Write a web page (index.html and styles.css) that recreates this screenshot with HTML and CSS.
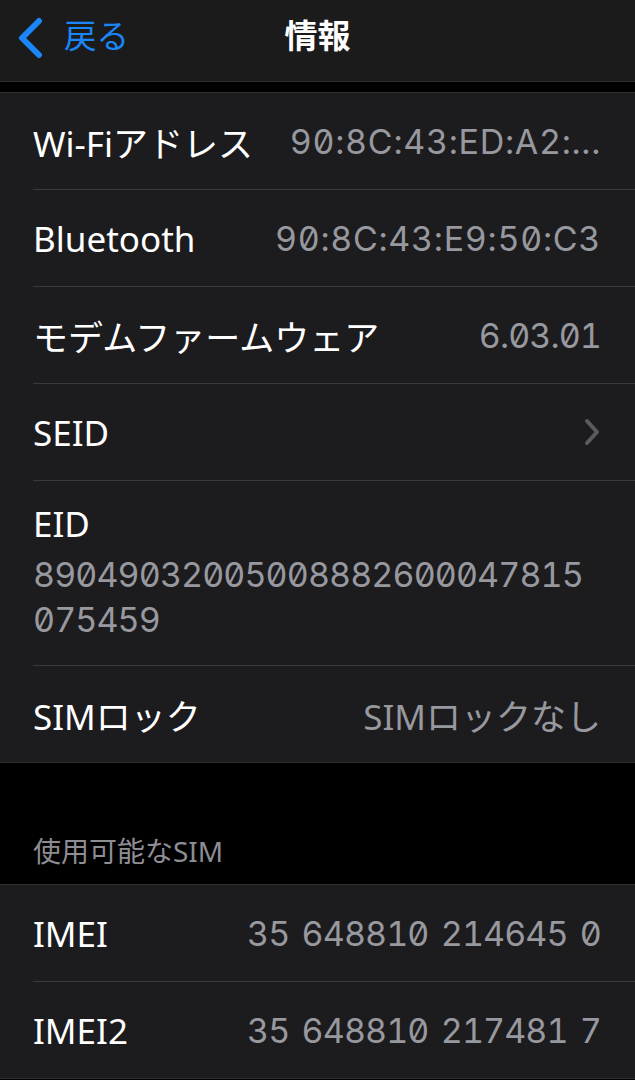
FILE: index.html
```html
<!DOCTYPE html>
<html lang="ja">
  <head>
    <meta charset="UTF-8" />
    <meta name="viewport" content="width=device-width, initial-scale=1.0" />
    <title>情報</title>
    <link rel="stylesheet" href="styles.css">
  </head>
  <body>
    <header class="nav-bar">
      <a class="back-link" href="#">
        <svg class="back-chevron" width="28" height="42" viewBox="0 0 28 42">
          <path d="M23 4 L6 21 L23 38" />
        </svg>
        <span>戻る</span>
      </a>
      <h1 class="nav-title">情報</h1>
      <span></span>
    </header>

    <section class="group">
      <div class="row">
        <span class="label">Wi-Fiアドレス</span>
        <span class="value value-mac">90:8C:43:ED:A2:...</span>
      </div>
      <div class="row">
        <span class="label">Bluetooth</span>
        <span class="value value-mac">90:8C:43:E9:50:C3</span>
      </div>
      <div class="row">
        <span class="label">モデムファームウェア</span>
        <span class="value">6.03.01</span>
      </div>
      <div class="row">
        <span class="label">SEID</span>
        <svg class="chevron" width="18" height="30" viewBox="0 0 18 30">
          <path d="M4 4 L14 15 L4 26" />
        </svg>
      </div>
      <div class="row row-stacked">
        <span class="label">EID</span>
        <span class="value">89049032005008882600047815</span>
        <span class="value">075459</span>
      </div>
      <div class="row">
        <span class="label">SIMロック</span>
        <span class="value value-text">SIMロックなし</span>
      </div>
    </section>

    <div class="section-header">使用可能なSIM</div>

    <section class="group">
      <div class="row">
        <span class="label">IMEI</span>
        <span class="value value-imei">35 648810 214645 0</span>
      </div>
      <div class="row">
        <span class="label">IMEI2</span>
        <span class="value value-imei">35 648810 217481 7</span>
      </div>
    </section>
  </body>
</html>
```

FILE: styles.css
```css
/* Page */
body {
  margin: 0;
  background: #000;
  color: #fff;
  font-family: "Noto Sans", "Noto Sans CJK JP", sans-serif;
  font-size: 35px;
}

/* Navigation bar */
.nav-bar {
  box-sizing: border-box;
  height: 82px;
  padding-bottom: 14px;
  background: #1b1b1c;
  border-bottom: 1px solid #2c2c2e;
  display: grid;
  grid-template-columns: 1fr auto 1fr;
  align-items: center;
}

.back-link {
  display: flex;
  align-items: center;
  gap: 20px;
  padding-left: 16px;
  color: #1a86f8;
  text-decoration: none;
  font-size: 32.5px;
}

.back-chevron {
  margin-top: 8px;
}

.back-chevron path {
  fill: none;
  stroke: #1a86f8;
  stroke-width: 6;
  stroke-linecap: round;
  stroke-linejoin: round;
}

.nav-title {
  margin: 0;
  font-size: 33px;
  font-weight: bold;
}

/* Grouped list */
.group {
  margin-top: 10px;
  background: #1c1c1e;
  border-top: 1px solid #2f2f31;
  border-bottom: 1px solid #2f2f31;
}

.row {
  box-sizing: border-box;
  height: 97px;
  margin-left: 33px;
  padding-right: 34px;
  display: flex;
  align-items: center;
  justify-content: space-between;
  border-bottom: 1px solid #3a3a3c;
}

.row:last-child {
  height: 96px;
  border-bottom: none;
}

.label {
  white-space: nowrap;
}

.value {
  color: #98989f;
  font-family: Inter, "Noto Sans CJK JP", sans-serif;
  font-size: 34px;
  letter-spacing: -0.9px;
  font-feature-settings: "tnum", "zero";
  white-space: nowrap;
  margin-left: 28px;
}

.value-mac {
  letter-spacing: 0.7px;
}

.value-imei {
  word-spacing: 4px;
}

.value-text {
  font-family: "Noto Sans", "Noto Sans CJK JP", sans-serif;
  font-size: 35px;
  letter-spacing: 0;
}

.chevron path {
  fill: none;
  stroke: #5b5b60;
  stroke-width: 4;
  stroke-linecap: round;
  stroke-linejoin: round;
}

/* EID row: label over value lines */
.row-stacked {
  height: 185px;
  flex-direction: column;
  align-items: flex-start;
  justify-content: flex-start;
  padding-top: 20px;
  line-height: 45px;
}

.row-stacked .label {
  margin-bottom: 6px;
}

.row-stacked .value {
  margin-left: 0;
}

/* Section header */
.section-header {
  height: 121px;
  box-sizing: border-box;
  padding: 0 33px 14px;
  display: flex;
  align-items: flex-end;
  color: #8d8d93;
  font-size: 28px;
}

.section-header + .group {
  margin-top: 0;
}
```
